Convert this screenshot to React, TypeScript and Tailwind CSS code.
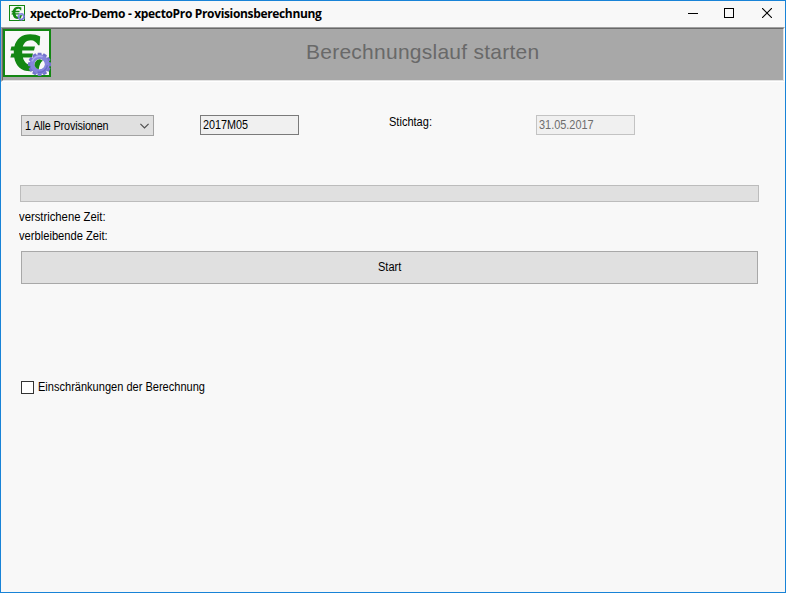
import type { ReactNode } from 'react';

function EuroLogo({ size, frame = 2 }: { size: number; frame?: number }) {
  const teeth = Array.from({ length: 12 }, (_, i) => i * 30);
  return (
    <svg width={size} height={size} viewBox="0 0 48 48" className="block shrink-0">
      <rect width="48" height="48" fill="#138713" />
      <rect x={frame} y={frame} width={48 - 2 * frame} height={48 - 2 * frame} fill="#f8f8f8" />
      <path
        d="M37.2 7.4L36.6 16.2H35.2C33.6 13.2 31 11.2 27.8 11.2C23.6 11.2 20.8 14 19.8 17.6H32L31 21.4H19.2V24.6H30L29 28.4H19.9C21.1 33 24 35.8 28.2 35.8C31.5 35.8 34 34.3 36.2 31.4V39.6C33.6 41.3 30.7 42.2 27.2 42.2C18.6 42.2 12.7 37.2 11.2 28.4H7.4L8.4 24.6H10.8V21.4H7.4L8.4 17.6H11.4C13.2 9.7 18.9 5.2 27.2 5.2C31 5.2 34.4 5.9 37.2 7.4Z"
        fill="#138713"
      />
      <g transform="translate(36.6 35.3)">
        {teeth.map((a) => (
          <path key={a} d="M-2.5-8L-1.8-11.6H1.8L2.5-8Z" fill="#7474cc" transform={`rotate(${a})`} />
        ))}
        <circle r="7.2" fill="none" stroke="#8585dc" strokeWidth="4.6" />
        <path d="M-7.6-3A8.2 8.2 0 0 1 3-7.6" fill="none" stroke="#aaaaf0" strokeWidth="1.6" />
        <path d="M7.8 1A8 8 0 0 1-2 7.7" fill="none" stroke="#6b6bc8" strokeWidth="1.5" />
        <circle r="5" fill="#f8f8f8" />
        <path d="M-3.6 3.4A5 5 0 0 1 1-4.9L3.4-3.6Q0-2-.8 4.8Q-2.6 4.6-3.6 3.4Z" fill="#138713" />
      </g>
    </svg>
  );
}

function Label({ children, className = '' }: { children: ReactNode; className?: string }) {
  return (
    <span className={`block origin-left whitespace-nowrap text-[12px] leading-[14px] ${className}`}>{children}</span>
  );
}

export default function App() {
  return (
    <div className="flex h-[593px] w-[786px] flex-col overflow-hidden border border-[#1883d7] bg-[#f8f8f8] font-['Liberation_Sans',Arial,sans-serif] text-black">
      <header className="flex h-[26px] shrink-0 justify-between pl-2">
        <div className="flex pt-1">
          <EuroLogo size={16} frame={3} />
          <h1 className="ml-[5px] mt-px whitespace-nowrap font-['Open_Sans',sans-serif] text-[12px] font-bold leading-[16px] tracking-[-0.34px]">
            xpectoPro-Demo - xpectoPro Provisionsberechnung
          </h1>
        </div>
        <div className="flex gap-[26px] pr-[13px] pt-[7px]">
          <svg width="10" height="10" shapeRendering="crispEdges"><path d="M0 5.5H10" stroke="black" /></svg>
          <svg width="10" height="10" shapeRendering="crispEdges"><rect x=".5" y=".5" width="9" height="9" fill="none" stroke="black" /></svg>
          <svg width="10" height="10" className="ml-[2px]"><path d="M0 0L10 10M10 0L0 10" stroke="black" strokeWidth="1.1" /></svg>
        </div>
      </header>

      <section className="h-[55px] w-[784px] shrink-0 border border-b-white border-l-[#a0a0a0] border-r-white border-t-[#a0a0a0]">
        <div className="flex h-[53px] border border-b-[#e3e3e3] border-l-[#696969] border-r-[#e3e3e3] border-t-[#696969] bg-[#a8a8a8]">
          <EuroLogo size={48} />
          <h2 className="ml-[255px] mt-[11px] whitespace-nowrap text-[21px] leading-[24px] tracking-[0.25px] text-[#696969]">
            Berechnungslauf starten
          </h2>
        </div>
      </section>

      <main className="flex flex-col pl-[18px]">
        <div className="ml-[2px] mt-[33px] flex h-[21px] items-start">
          <button className="flex h-[21px] w-[133px] items-center justify-between border border-[#a3a3a3] bg-[#e0e0e0] pl-[3px] pr-[4px]">
            <Label className="w-[84px] scale-x-[0.9] text-left tracking-[-0.15px]">1 Alle Provisionen</Label>
            <svg width="9" height="6" fill="none"><path d="M.4 .8L4.5 4.9L8.6 .8" stroke="#505050" strokeWidth="1.2" /></svg>
          </button>
          <div className="ml-[46px] h-[20px] w-[99px] border border-[#7a7a7a] bg-[#f0f0f0] pl-[2px] pt-[2px]">
            <Label className="scale-x-[0.9]">2017M05</Label>
          </div>
          <Label className="ml-[90px] w-[147px] scale-x-[0.92]">Stichtag:</Label>
          <div className="h-[20px] w-[99px] border border-[#c3c3c3] bg-[#f0f0f0] pl-[2px] pt-[2px] text-[#6d6d6d]">
            <Label className="scale-x-[0.91]">31.05.2017</Label>
          </div>
        </div>

        <div className="ml-px mt-[49px] h-[17px] w-[739px] border border-[#bcbcbc] bg-[#e0e0e0]" />
        <Label className="mt-[8px] scale-x-[0.94]">verstrichene Zeit:</Label>
        <Label className="mt-[5px] scale-x-[0.93]">verbleibende Zeit:</Label>
        <button className="ml-[2px] mt-[8px] flex h-[33px] w-[737px] items-center justify-center border border-[#a8a8a8] bg-[#e0e0e0] pb-px pl-[2px]">
          <Label className="scale-x-[0.92]">Start</Label>
        </button>
        <label className="ml-[2px] mt-[96px] flex items-start">
          <span className="mt-px h-[13px] w-[13px] border border-[#333] bg-white" />
          <Label className="ml-[4px] scale-x-[0.92]">Einschränkungen der Berechnung</Label>
        </label>
      </main>
    </div>
  );
}
